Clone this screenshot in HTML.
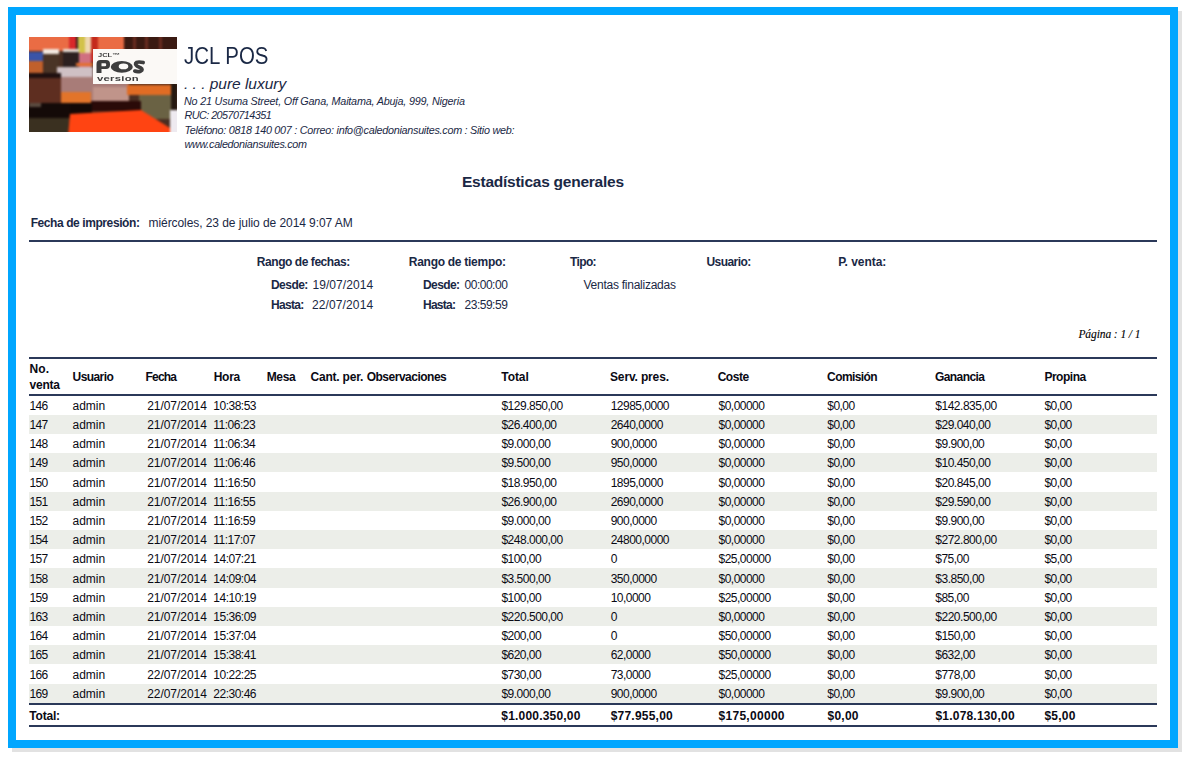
<!DOCTYPE html>
<html><head><meta charset="utf-8"><style>
html,body{margin:0;padding:0;background:#fff;}
body{width:1188px;height:758px;position:relative;overflow:hidden;font-family:"Liberation Sans",sans-serif;}
.frame{position:absolute;left:8px;top:7px;width:1154px;height:725px;border:8px solid #00a6ff;box-shadow:4px 4px 0 #e2e2e2;background:#fff;}
.t{position:absolute;white-space:nowrap;}
.r{position:absolute;}
.logo{position:absolute;left:29px;top:37px;}
</style></head><body>
<div class="frame"></div>
<svg class="logo" width="148" height="95" viewBox="0 0 148 95">
<defs><filter id="bl" x="-5%" y="-5%" width="110%" height="110%" color-interpolation-filters="sRGB"><feGaussianBlur stdDeviation="1.1"/></filter>
<filter id="bl2" color-interpolation-filters="sRGB"><feGaussianBlur stdDeviation="0.45"/></filter>
<clipPath id="cp"><rect width="148" height="95"/></clipPath></defs>
<g clip-path="url(#cp)">
<rect width="148" height="95" fill="#4a2e22"/>
<g filter="url(#bl)">
<rect x="-5" y="-5" width="100" height="19" fill="#ea6c44"/>
<rect x="40" y="-5" width="7" height="28" fill="#d8282a"/>
<rect x="47" y="-5" width="2" height="28" fill="#302020"/>
<rect x="49" y="-5" width="7" height="21" fill="#d2c24a"/>
<rect x="56" y="-5" width="6" height="21" fill="#eed8b0"/>
<rect x="62" y="-5" width="7" height="30" fill="#c42a1c"/>
<rect x="95" y="-5" width="58" height="18" fill="#3a1a12"/>
<rect x="104" y="-5" width="3" height="18" fill="#6a2c20"/>
<rect x="116" y="-5" width="3" height="18" fill="#6a2c20"/>
<rect x="130" y="-5" width="3" height="18" fill="#6a2c20"/>
<rect x="-5" y="15" width="19" height="9" fill="#3a54a8"/>
<rect x="-5" y="24" width="19" height="12" fill="#c0602c"/>
<rect x="14" y="12" width="16" height="5" fill="#f2e8e0"/>
<rect x="15" y="17" width="15" height="19" fill="#4a3426"/>
<rect x="34" y="12" width="16" height="4" fill="#e8e0d8"/>
<rect x="34" y="15" width="16" height="17" fill="#2c2020"/>
<rect x="50" y="16" width="12" height="16" fill="#d07080"/>
<rect x="47" y="26" width="17" height="3" fill="#e47030"/>
<rect x="28" y="30" width="36" height="10" fill="#cfc0c4"/>
<rect x="30" y="40" width="70" height="24" fill="#a87c78"/>
<rect x="64" y="50" width="36" height="14" fill="#c0948a"/>
<rect x="-5" y="36" width="37" height="5" fill="#201010"/>
<rect x="-5" y="41" width="37" height="26" fill="#5e2e20"/>
<rect x="32" y="55" width="30" height="11" fill="#e2742a"/>
<rect x="98" y="48" width="44" height="10" fill="#e06c24"/>
<rect x="110" y="58" width="34" height="24" fill="#6a6244"/>
<rect x="142" y="46" width="6" height="28" fill="#241810"/>
<rect x="62" y="64" width="50" height="10" fill="#2a0a08"/>
<rect x="13" y="66" width="50" height="12" fill="#120806"/>
<rect x="-5" y="66" width="46" height="15" fill="#140a08"/>
<rect x="0" y="66" width="12" height="4" fill="#5a4a40"/>
<rect x="-5" y="81" width="46" height="20" fill="#3a3020"/>
<polygon points="41,77 112,73 141,91 141,100 39,100" fill="#ff4412"/>
<rect x="141" y="73" width="10" height="27" fill="#eeeaf0"/>
</g>
<rect x="64" y="12" width="84" height="35" fill="#fbf9f6"/>
<g fill="#3e3e3e" filter="url(#bl2)">
<text x="69" y="20.5" font-family="'Liberation Sans', sans-serif" font-weight="bold" font-size="7.5" transform="translate(69 20.5) scale(1.0 0.8) translate(-69 -20.5)">JCL™</text>
<path fill-rule="evenodd" d="M67.5,36 L67.5,27 Q67.5,23 71.5,23 L77,23 Q81,23 81,27 L81,28 Q81,32 77,32 L72.5,32 L72.5,36 Z M72.5,26.3 L76,26.3 Q77.2,26.3 77.2,27.5 L77.2,28 Q77.2,29.2 76,29.2 L72.5,29.2 Z"/>
<path fill-rule="evenodd" d="M81.8,29.9 A11,5.9 0 1,0 103.8,29.9 A11,5.9 0 1,0 81.8,29.9 Z M89.7,29.4 A4.8,2.8 0 1,0 99.3,29.4 A4.8,2.8 0 1,0 89.7,29.4 Z"/>
<path fill="none" stroke="#3e3e3e" stroke-width="3.6" stroke-linecap="round" d="M114.2,25.6 Q110,24.4 107.5,25.4 Q105.2,27 108.2,29.2 L111.6,30.8 Q114.6,32.8 111.6,34.2 Q108.5,35.2 105.8,34"/>
<text x="68" y="43.8" font-family="'Liberation Sans', sans-serif" font-weight="bold" font-size="8" letter-spacing="0.2" transform="translate(68 43.8) scale(1.41 0.85) translate(-68 -43.8)">version</text>
</g>
</g>
</svg>

<div class="t" style="left:184.00px;top:44.26px;font-size:24.5px;line-height:24.5px;font-weight:normal;font-style:normal;font-family:'Liberation Sans', sans-serif;color:#1a2845;transform:scaleX(0.8350);transform-origin:0.00px 0;">JCL POS</div>
<div class="t" style="left:184.00px;top:75.88px;font-size:15.5px;line-height:15.5px;font-weight:normal;font-style:italic;font-family:'Liberation Sans', sans-serif;color:#1a2845;letter-spacing:-0.020px;">. . . pure luxury</div>
<div class="t" style="left:184.00px;top:95.86px;font-size:10.8px;line-height:10.8px;font-weight:normal;font-style:italic;font-family:'Liberation Sans', sans-serif;color:#1a2845;letter-spacing:-0.203px;">No 21 Usuma Street, Off Gana, Maitama, Abuja, 999, Nigeria</div>
<div class="t" style="left:184.50px;top:109.86px;font-size:10.8px;line-height:10.8px;font-weight:normal;font-style:italic;font-family:'Liberation Sans', sans-serif;color:#1a2845;letter-spacing:-0.552px;">RUC: 20570714351</div>
<div class="t" style="left:184.50px;top:125.26px;font-size:10.8px;line-height:10.8px;font-weight:normal;font-style:italic;font-family:'Liberation Sans', sans-serif;color:#1a2845;letter-spacing:-0.274px;">Teléfono: 0818 140 007 : Correo: info@caledoniansuites.com : Sitio web:</div>
<div class="t" style="left:184.50px;top:139.06px;font-size:10.8px;line-height:10.8px;font-weight:normal;font-style:italic;font-family:'Liberation Sans', sans-serif;color:#1a2845;letter-spacing:-0.312px;">www.caledoniansuites.com</div>
<div class="t" style="left:462.00px;top:174.18px;font-size:15.5px;line-height:15.5px;font-weight:bold;font-style:normal;font-family:'Liberation Sans', sans-serif;color:#1a2845;letter-spacing:-0.245px;">Estadísticas generales</div>
<div class="t" style="left:30.70px;top:216.64px;font-size:12px;line-height:12px;font-weight:bold;font-style:normal;font-family:'Liberation Sans', sans-serif;color:#1a2845;letter-spacing:-0.417px;">Fecha de impresión:</div>
<div class="t" style="left:148.50px;top:216.64px;font-size:12px;line-height:12px;font-weight:normal;font-style:normal;font-family:'Liberation Sans', sans-serif;color:#1a2845;letter-spacing:-0.070px;">miércoles, 23 de julio de 2014 9:07 AM</div>
<div class="r" style="left:29px;top:240px;width:1128px;height:2px;background:#2b3959"></div>
<div class="t" style="left:256.80px;top:255.54px;font-size:12px;line-height:12px;font-weight:bold;font-style:normal;font-family:'Liberation Sans', sans-serif;color:#1a2845;letter-spacing:-0.442px;">Rango de fechas:</div>
<div class="t" style="left:271.00px;top:278.54px;font-size:12px;line-height:12px;font-weight:bold;font-style:normal;font-family:'Liberation Sans', sans-serif;color:#1a2845;letter-spacing:-0.545px;">Desde:</div>
<div class="t" style="left:312.50px;top:278.54px;font-size:12px;line-height:12px;font-weight:normal;font-style:normal;font-family:'Liberation Sans', sans-serif;color:#1a2845;letter-spacing:0.061px;">19/07/2014</div>
<div class="t" style="left:271.00px;top:299.24px;font-size:12px;line-height:12px;font-weight:bold;font-style:normal;font-family:'Liberation Sans', sans-serif;color:#1a2845;letter-spacing:-0.695px;">Hasta:</div>
<div class="t" style="left:311.90px;top:299.24px;font-size:12px;line-height:12px;font-weight:normal;font-style:normal;font-family:'Liberation Sans', sans-serif;color:#1a2845;letter-spacing:0.128px;">22/07/2014</div>
<div class="t" style="left:408.80px;top:255.54px;font-size:12px;line-height:12px;font-weight:bold;font-style:normal;font-family:'Liberation Sans', sans-serif;color:#1a2845;letter-spacing:-0.275px;">Rango de tiempo:</div>
<div class="t" style="left:423.00px;top:278.54px;font-size:12px;line-height:12px;font-weight:bold;font-style:normal;font-family:'Liberation Sans', sans-serif;color:#1a2845;letter-spacing:-0.585px;">Desde:</div>
<div class="t" style="left:464.60px;top:278.54px;font-size:12px;line-height:12px;font-weight:normal;font-style:normal;font-family:'Liberation Sans', sans-serif;color:#1a2845;letter-spacing:-0.500px;">00:00:00</div>
<div class="t" style="left:423.00px;top:299.24px;font-size:12px;line-height:12px;font-weight:bold;font-style:normal;font-family:'Liberation Sans', sans-serif;color:#1a2845;letter-spacing:-0.735px;">Hasta:</div>
<div class="t" style="left:464.60px;top:299.24px;font-size:12px;line-height:12px;font-weight:normal;font-style:normal;font-family:'Liberation Sans', sans-serif;color:#1a2845;letter-spacing:-0.500px;">23:59:59</div>
<div class="t" style="left:570.00px;top:255.54px;font-size:12px;line-height:12px;font-weight:bold;font-style:normal;font-family:'Liberation Sans', sans-serif;color:#1a2845;letter-spacing:-0.625px;">Tipo:</div>
<div class="t" style="left:583.50px;top:279.24px;font-size:12px;line-height:12px;font-weight:normal;font-style:normal;font-family:'Liberation Sans', sans-serif;color:#1a2845;letter-spacing:-0.254px;">Ventas finalizadas</div>
<div class="t" style="left:706.50px;top:255.54px;font-size:12px;line-height:12px;font-weight:bold;font-style:normal;font-family:'Liberation Sans', sans-serif;color:#1a2845;letter-spacing:-0.568px;">Usuario:</div>
<div class="t" style="left:838.20px;top:255.54px;font-size:12px;line-height:12px;font-weight:bold;font-style:normal;font-family:'Liberation Sans', sans-serif;color:#1a2845;letter-spacing:-0.047px;">P. venta:</div>
<div class="t" style="left:1078.38px;top:329.27px;font-size:11.5px;line-height:11.5px;font-weight:normal;font-style:italic;font-family:'Liberation Serif', serif;color:#000;letter-spacing:-0.087px;-webkit-text-stroke:0.12px #000;">Página : 1 / 1</div>
<div class="r" style="left:29px;top:357px;width:1128px;height:2px;background:#2b3959"></div>
<div class="r" style="left:29px;top:394px;width:1128px;height:2px;background:#2b3959"></div>
<div class="t" style="left:72.60px;top:370.64px;font-size:12px;line-height:12px;font-weight:bold;font-style:normal;font-family:'Liberation Sans', sans-serif;color:#0a0a14;letter-spacing:-0.579px;">Usuario</div>
<div class="t" style="left:145.50px;top:370.64px;font-size:12px;line-height:12px;font-weight:bold;font-style:normal;font-family:'Liberation Sans', sans-serif;color:#0a0a14;letter-spacing:-0.787px;">Fecha</div>
<div class="t" style="left:213.70px;top:370.64px;font-size:12px;line-height:12px;font-weight:bold;font-style:normal;font-family:'Liberation Sans', sans-serif;color:#0a0a14;letter-spacing:-0.275px;">Hora</div>
<div class="t" style="left:266.70px;top:370.64px;font-size:12px;line-height:12px;font-weight:bold;font-style:normal;font-family:'Liberation Sans', sans-serif;color:#0a0a14;letter-spacing:-0.333px;">Mesa</div>
<div class="t" style="left:310.50px;top:370.64px;font-size:12px;line-height:12px;font-weight:bold;font-style:normal;font-family:'Liberation Sans', sans-serif;color:#0a0a14;letter-spacing:-0.208px;">Cant. per.</div>
<div class="t" style="left:366.70px;top:370.64px;font-size:12px;line-height:12px;font-weight:bold;font-style:normal;font-family:'Liberation Sans', sans-serif;color:#0a0a14;letter-spacing:-0.496px;">Observaciones</div>
<div class="t" style="left:501.30px;top:370.64px;font-size:12px;line-height:12px;font-weight:bold;font-style:normal;font-family:'Liberation Sans', sans-serif;color:#0a0a14;letter-spacing:-0.069px;">Total</div>
<div class="t" style="left:610.00px;top:370.64px;font-size:12px;line-height:12px;font-weight:bold;font-style:normal;font-family:'Liberation Sans', sans-serif;color:#0a0a14;letter-spacing:-0.148px;">Serv. pres.</div>
<div class="t" style="left:717.70px;top:370.64px;font-size:12px;line-height:12px;font-weight:bold;font-style:normal;font-family:'Liberation Sans', sans-serif;color:#0a0a14;letter-spacing:-0.488px;">Coste</div>
<div class="t" style="left:827.10px;top:370.64px;font-size:12px;line-height:12px;font-weight:bold;font-style:normal;font-family:'Liberation Sans', sans-serif;color:#0a0a14;letter-spacing:-0.582px;">Comisión</div>
<div class="t" style="left:935.00px;top:370.64px;font-size:12px;line-height:12px;font-weight:bold;font-style:normal;font-family:'Liberation Sans', sans-serif;color:#0a0a14;letter-spacing:-0.586px;">Ganancia</div>
<div class="t" style="left:1044.40px;top:370.64px;font-size:12px;line-height:12px;font-weight:bold;font-style:normal;font-family:'Liberation Sans', sans-serif;color:#0a0a14;letter-spacing:-0.475px;">Propina</div>
<div class="t" style="left:29.60px;top:362.84px;font-size:12px;line-height:12px;font-weight:bold;font-style:normal;font-family:'Liberation Sans', sans-serif;color:#0a0a14;letter-spacing:0.037px;">No.</div>
<div class="t" style="left:29.60px;top:379.24px;font-size:12px;line-height:12px;font-weight:bold;font-style:normal;font-family:'Liberation Sans', sans-serif;color:#0a0a14;letter-spacing:-0.256px;">venta</div>
<div class="r" style="left:29px;top:415px;width:1128px;height:19px;background:#eceee9"></div>
<div class="r" style="left:29px;top:453px;width:1128px;height:19px;background:#eceee9"></div>
<div class="r" style="left:29px;top:492px;width:1128px;height:19px;background:#eceee9"></div>
<div class="r" style="left:29px;top:530px;width:1128px;height:19px;background:#eceee9"></div>
<div class="r" style="left:29px;top:568px;width:1128px;height:20px;background:#eceee9"></div>
<div class="r" style="left:29px;top:607px;width:1128px;height:19px;background:#eceee9"></div>
<div class="r" style="left:29px;top:645px;width:1128px;height:19px;background:#eceee9"></div>
<div class="r" style="left:29px;top:684px;width:1128px;height:19px;background:#eceee9"></div>
<div class="t" style="left:29.60px;top:400.04px;font-size:12px;line-height:12px;font-weight:normal;font-style:normal;font-family:'Liberation Sans', sans-serif;color:#0a0a14;letter-spacing:-0.705px;">146</div>
<div class="t" style="left:72.50px;top:400.04px;font-size:12px;line-height:12px;font-weight:normal;font-style:normal;font-family:'Liberation Sans', sans-serif;color:#0a0a14;">admin</div>
<div class="t" style="left:147.20px;top:400.04px;font-size:12px;line-height:12px;font-weight:normal;font-style:normal;font-family:'Liberation Sans', sans-serif;color:#0a0a14;letter-spacing:-0.047px;">21/07/2014</div>
<div class="t" style="left:213.30px;top:400.04px;font-size:12px;line-height:12px;font-weight:normal;font-style:normal;font-family:'Liberation Sans', sans-serif;color:#0a0a14;letter-spacing:-0.497px;">10:38:53</div>
<div class="t" style="left:501.40px;top:400.04px;font-size:12px;line-height:12px;font-weight:normal;font-style:normal;font-family:'Liberation Sans', sans-serif;color:#0a0a14;letter-spacing:-0.489px;">$129.850,00</div>
<div class="t" style="left:610.70px;top:400.04px;font-size:12px;line-height:12px;font-weight:normal;font-style:normal;font-family:'Liberation Sans', sans-serif;color:#0a0a14;letter-spacing:-0.507px;">12985,0000</div>
<div class="t" style="left:718.50px;top:400.04px;font-size:12px;line-height:12px;font-weight:normal;font-style:normal;font-family:'Liberation Sans', sans-serif;color:#0a0a14;letter-spacing:-0.517px;">$0,00000</div>
<div class="t" style="left:827.30px;top:400.04px;font-size:12px;line-height:12px;font-weight:normal;font-style:normal;font-family:'Liberation Sans', sans-serif;color:#0a0a14;letter-spacing:-0.553px;">$0,00</div>
<div class="t" style="left:935.30px;top:400.04px;font-size:12px;line-height:12px;font-weight:normal;font-style:normal;font-family:'Liberation Sans', sans-serif;color:#0a0a14;letter-spacing:-0.489px;">$142.835,00</div>
<div class="t" style="left:1044.40px;top:400.04px;font-size:12px;line-height:12px;font-weight:normal;font-style:normal;font-family:'Liberation Sans', sans-serif;color:#0a0a14;letter-spacing:-0.553px;">$0,00</div>
<div class="t" style="left:29.60px;top:419.04px;font-size:12px;line-height:12px;font-weight:normal;font-style:normal;font-family:'Liberation Sans', sans-serif;color:#0a0a14;letter-spacing:-0.705px;">147</div>
<div class="t" style="left:72.50px;top:419.04px;font-size:12px;line-height:12px;font-weight:normal;font-style:normal;font-family:'Liberation Sans', sans-serif;color:#0a0a14;">admin</div>
<div class="t" style="left:147.20px;top:419.04px;font-size:12px;line-height:12px;font-weight:normal;font-style:normal;font-family:'Liberation Sans', sans-serif;color:#0a0a14;letter-spacing:-0.047px;">21/07/2014</div>
<div class="t" style="left:213.30px;top:419.04px;font-size:12px;line-height:12px;font-weight:normal;font-style:normal;font-family:'Liberation Sans', sans-serif;color:#0a0a14;letter-spacing:-0.497px;">11:06:23</div>
<div class="t" style="left:501.40px;top:419.04px;font-size:12px;line-height:12px;font-weight:normal;font-style:normal;font-family:'Liberation Sans', sans-serif;color:#0a0a14;letter-spacing:-0.491px;">$26.400,00</div>
<div class="t" style="left:610.70px;top:419.04px;font-size:12px;line-height:12px;font-weight:normal;font-style:normal;font-family:'Liberation Sans', sans-serif;color:#0a0a14;letter-spacing:-0.511px;">2640,0000</div>
<div class="t" style="left:718.50px;top:419.04px;font-size:12px;line-height:12px;font-weight:normal;font-style:normal;font-family:'Liberation Sans', sans-serif;color:#0a0a14;letter-spacing:-0.517px;">$0,00000</div>
<div class="t" style="left:827.30px;top:419.04px;font-size:12px;line-height:12px;font-weight:normal;font-style:normal;font-family:'Liberation Sans', sans-serif;color:#0a0a14;letter-spacing:-0.553px;">$0,00</div>
<div class="t" style="left:935.30px;top:419.04px;font-size:12px;line-height:12px;font-weight:normal;font-style:normal;font-family:'Liberation Sans', sans-serif;color:#0a0a14;letter-spacing:-0.491px;">$29.040,00</div>
<div class="t" style="left:1044.40px;top:419.04px;font-size:12px;line-height:12px;font-weight:normal;font-style:normal;font-family:'Liberation Sans', sans-serif;color:#0a0a14;letter-spacing:-0.553px;">$0,00</div>
<div class="t" style="left:29.60px;top:438.04px;font-size:12px;line-height:12px;font-weight:normal;font-style:normal;font-family:'Liberation Sans', sans-serif;color:#0a0a14;letter-spacing:-0.705px;">148</div>
<div class="t" style="left:72.50px;top:438.04px;font-size:12px;line-height:12px;font-weight:normal;font-style:normal;font-family:'Liberation Sans', sans-serif;color:#0a0a14;">admin</div>
<div class="t" style="left:147.20px;top:438.04px;font-size:12px;line-height:12px;font-weight:normal;font-style:normal;font-family:'Liberation Sans', sans-serif;color:#0a0a14;letter-spacing:-0.047px;">21/07/2014</div>
<div class="t" style="left:213.30px;top:438.04px;font-size:12px;line-height:12px;font-weight:normal;font-style:normal;font-family:'Liberation Sans', sans-serif;color:#0a0a14;letter-spacing:-0.497px;">11:06:34</div>
<div class="t" style="left:501.40px;top:438.04px;font-size:12px;line-height:12px;font-weight:normal;font-style:normal;font-family:'Liberation Sans', sans-serif;color:#0a0a14;letter-spacing:-0.494px;">$9.000,00</div>
<div class="t" style="left:610.70px;top:438.04px;font-size:12px;line-height:12px;font-weight:normal;font-style:normal;font-family:'Liberation Sans', sans-serif;color:#0a0a14;letter-spacing:-0.517px;">900,0000</div>
<div class="t" style="left:718.50px;top:438.04px;font-size:12px;line-height:12px;font-weight:normal;font-style:normal;font-family:'Liberation Sans', sans-serif;color:#0a0a14;letter-spacing:-0.517px;">$0,00000</div>
<div class="t" style="left:827.30px;top:438.04px;font-size:12px;line-height:12px;font-weight:normal;font-style:normal;font-family:'Liberation Sans', sans-serif;color:#0a0a14;letter-spacing:-0.553px;">$0,00</div>
<div class="t" style="left:935.30px;top:438.04px;font-size:12px;line-height:12px;font-weight:normal;font-style:normal;font-family:'Liberation Sans', sans-serif;color:#0a0a14;letter-spacing:-0.494px;">$9.900,00</div>
<div class="t" style="left:1044.40px;top:438.04px;font-size:12px;line-height:12px;font-weight:normal;font-style:normal;font-family:'Liberation Sans', sans-serif;color:#0a0a14;letter-spacing:-0.553px;">$0,00</div>
<div class="t" style="left:29.60px;top:457.04px;font-size:12px;line-height:12px;font-weight:normal;font-style:normal;font-family:'Liberation Sans', sans-serif;color:#0a0a14;letter-spacing:-0.705px;">149</div>
<div class="t" style="left:72.50px;top:457.04px;font-size:12px;line-height:12px;font-weight:normal;font-style:normal;font-family:'Liberation Sans', sans-serif;color:#0a0a14;">admin</div>
<div class="t" style="left:147.20px;top:457.04px;font-size:12px;line-height:12px;font-weight:normal;font-style:normal;font-family:'Liberation Sans', sans-serif;color:#0a0a14;letter-spacing:-0.047px;">21/07/2014</div>
<div class="t" style="left:213.30px;top:457.04px;font-size:12px;line-height:12px;font-weight:normal;font-style:normal;font-family:'Liberation Sans', sans-serif;color:#0a0a14;letter-spacing:-0.497px;">11:06:46</div>
<div class="t" style="left:501.40px;top:457.04px;font-size:12px;line-height:12px;font-weight:normal;font-style:normal;font-family:'Liberation Sans', sans-serif;color:#0a0a14;letter-spacing:-0.494px;">$9.500,00</div>
<div class="t" style="left:610.70px;top:457.04px;font-size:12px;line-height:12px;font-weight:normal;font-style:normal;font-family:'Liberation Sans', sans-serif;color:#0a0a14;letter-spacing:-0.517px;">950,0000</div>
<div class="t" style="left:718.50px;top:457.04px;font-size:12px;line-height:12px;font-weight:normal;font-style:normal;font-family:'Liberation Sans', sans-serif;color:#0a0a14;letter-spacing:-0.517px;">$0,00000</div>
<div class="t" style="left:827.30px;top:457.04px;font-size:12px;line-height:12px;font-weight:normal;font-style:normal;font-family:'Liberation Sans', sans-serif;color:#0a0a14;letter-spacing:-0.553px;">$0,00</div>
<div class="t" style="left:935.30px;top:457.04px;font-size:12px;line-height:12px;font-weight:normal;font-style:normal;font-family:'Liberation Sans', sans-serif;color:#0a0a14;letter-spacing:-0.491px;">$10.450,00</div>
<div class="t" style="left:1044.40px;top:457.04px;font-size:12px;line-height:12px;font-weight:normal;font-style:normal;font-family:'Liberation Sans', sans-serif;color:#0a0a14;letter-spacing:-0.553px;">$0,00</div>
<div class="t" style="left:29.60px;top:477.04px;font-size:12px;line-height:12px;font-weight:normal;font-style:normal;font-family:'Liberation Sans', sans-serif;color:#0a0a14;letter-spacing:-0.705px;">150</div>
<div class="t" style="left:72.50px;top:477.04px;font-size:12px;line-height:12px;font-weight:normal;font-style:normal;font-family:'Liberation Sans', sans-serif;color:#0a0a14;">admin</div>
<div class="t" style="left:147.20px;top:477.04px;font-size:12px;line-height:12px;font-weight:normal;font-style:normal;font-family:'Liberation Sans', sans-serif;color:#0a0a14;letter-spacing:-0.047px;">21/07/2014</div>
<div class="t" style="left:213.30px;top:477.04px;font-size:12px;line-height:12px;font-weight:normal;font-style:normal;font-family:'Liberation Sans', sans-serif;color:#0a0a14;letter-spacing:-0.497px;">11:16:50</div>
<div class="t" style="left:501.40px;top:477.04px;font-size:12px;line-height:12px;font-weight:normal;font-style:normal;font-family:'Liberation Sans', sans-serif;color:#0a0a14;letter-spacing:-0.491px;">$18.950,00</div>
<div class="t" style="left:610.70px;top:477.04px;font-size:12px;line-height:12px;font-weight:normal;font-style:normal;font-family:'Liberation Sans', sans-serif;color:#0a0a14;letter-spacing:-0.511px;">1895,0000</div>
<div class="t" style="left:718.50px;top:477.04px;font-size:12px;line-height:12px;font-weight:normal;font-style:normal;font-family:'Liberation Sans', sans-serif;color:#0a0a14;letter-spacing:-0.517px;">$0,00000</div>
<div class="t" style="left:827.30px;top:477.04px;font-size:12px;line-height:12px;font-weight:normal;font-style:normal;font-family:'Liberation Sans', sans-serif;color:#0a0a14;letter-spacing:-0.553px;">$0,00</div>
<div class="t" style="left:935.30px;top:477.04px;font-size:12px;line-height:12px;font-weight:normal;font-style:normal;font-family:'Liberation Sans', sans-serif;color:#0a0a14;letter-spacing:-0.491px;">$20.845,00</div>
<div class="t" style="left:1044.40px;top:477.04px;font-size:12px;line-height:12px;font-weight:normal;font-style:normal;font-family:'Liberation Sans', sans-serif;color:#0a0a14;letter-spacing:-0.553px;">$0,00</div>
<div class="t" style="left:29.60px;top:496.04px;font-size:12px;line-height:12px;font-weight:normal;font-style:normal;font-family:'Liberation Sans', sans-serif;color:#0a0a14;letter-spacing:-0.705px;">151</div>
<div class="t" style="left:72.50px;top:496.04px;font-size:12px;line-height:12px;font-weight:normal;font-style:normal;font-family:'Liberation Sans', sans-serif;color:#0a0a14;">admin</div>
<div class="t" style="left:147.20px;top:496.04px;font-size:12px;line-height:12px;font-weight:normal;font-style:normal;font-family:'Liberation Sans', sans-serif;color:#0a0a14;letter-spacing:-0.047px;">21/07/2014</div>
<div class="t" style="left:213.30px;top:496.04px;font-size:12px;line-height:12px;font-weight:normal;font-style:normal;font-family:'Liberation Sans', sans-serif;color:#0a0a14;letter-spacing:-0.497px;">11:16:55</div>
<div class="t" style="left:501.40px;top:496.04px;font-size:12px;line-height:12px;font-weight:normal;font-style:normal;font-family:'Liberation Sans', sans-serif;color:#0a0a14;letter-spacing:-0.491px;">$26.900,00</div>
<div class="t" style="left:610.70px;top:496.04px;font-size:12px;line-height:12px;font-weight:normal;font-style:normal;font-family:'Liberation Sans', sans-serif;color:#0a0a14;letter-spacing:-0.511px;">2690,0000</div>
<div class="t" style="left:718.50px;top:496.04px;font-size:12px;line-height:12px;font-weight:normal;font-style:normal;font-family:'Liberation Sans', sans-serif;color:#0a0a14;letter-spacing:-0.517px;">$0,00000</div>
<div class="t" style="left:827.30px;top:496.04px;font-size:12px;line-height:12px;font-weight:normal;font-style:normal;font-family:'Liberation Sans', sans-serif;color:#0a0a14;letter-spacing:-0.553px;">$0,00</div>
<div class="t" style="left:935.30px;top:496.04px;font-size:12px;line-height:12px;font-weight:normal;font-style:normal;font-family:'Liberation Sans', sans-serif;color:#0a0a14;letter-spacing:-0.491px;">$29.590,00</div>
<div class="t" style="left:1044.40px;top:496.04px;font-size:12px;line-height:12px;font-weight:normal;font-style:normal;font-family:'Liberation Sans', sans-serif;color:#0a0a14;letter-spacing:-0.553px;">$0,00</div>
<div class="t" style="left:29.60px;top:515.04px;font-size:12px;line-height:12px;font-weight:normal;font-style:normal;font-family:'Liberation Sans', sans-serif;color:#0a0a14;letter-spacing:-0.705px;">152</div>
<div class="t" style="left:72.50px;top:515.04px;font-size:12px;line-height:12px;font-weight:normal;font-style:normal;font-family:'Liberation Sans', sans-serif;color:#0a0a14;">admin</div>
<div class="t" style="left:147.20px;top:515.04px;font-size:12px;line-height:12px;font-weight:normal;font-style:normal;font-family:'Liberation Sans', sans-serif;color:#0a0a14;letter-spacing:-0.047px;">21/07/2014</div>
<div class="t" style="left:213.30px;top:515.04px;font-size:12px;line-height:12px;font-weight:normal;font-style:normal;font-family:'Liberation Sans', sans-serif;color:#0a0a14;letter-spacing:-0.497px;">11:16:59</div>
<div class="t" style="left:501.40px;top:515.04px;font-size:12px;line-height:12px;font-weight:normal;font-style:normal;font-family:'Liberation Sans', sans-serif;color:#0a0a14;letter-spacing:-0.494px;">$9.000,00</div>
<div class="t" style="left:610.70px;top:515.04px;font-size:12px;line-height:12px;font-weight:normal;font-style:normal;font-family:'Liberation Sans', sans-serif;color:#0a0a14;letter-spacing:-0.517px;">900,0000</div>
<div class="t" style="left:718.50px;top:515.04px;font-size:12px;line-height:12px;font-weight:normal;font-style:normal;font-family:'Liberation Sans', sans-serif;color:#0a0a14;letter-spacing:-0.517px;">$0,00000</div>
<div class="t" style="left:827.30px;top:515.04px;font-size:12px;line-height:12px;font-weight:normal;font-style:normal;font-family:'Liberation Sans', sans-serif;color:#0a0a14;letter-spacing:-0.553px;">$0,00</div>
<div class="t" style="left:935.30px;top:515.04px;font-size:12px;line-height:12px;font-weight:normal;font-style:normal;font-family:'Liberation Sans', sans-serif;color:#0a0a14;letter-spacing:-0.494px;">$9.900,00</div>
<div class="t" style="left:1044.40px;top:515.04px;font-size:12px;line-height:12px;font-weight:normal;font-style:normal;font-family:'Liberation Sans', sans-serif;color:#0a0a14;letter-spacing:-0.553px;">$0,00</div>
<div class="t" style="left:29.60px;top:534.04px;font-size:12px;line-height:12px;font-weight:normal;font-style:normal;font-family:'Liberation Sans', sans-serif;color:#0a0a14;letter-spacing:-0.705px;">154</div>
<div class="t" style="left:72.50px;top:534.04px;font-size:12px;line-height:12px;font-weight:normal;font-style:normal;font-family:'Liberation Sans', sans-serif;color:#0a0a14;">admin</div>
<div class="t" style="left:147.20px;top:534.04px;font-size:12px;line-height:12px;font-weight:normal;font-style:normal;font-family:'Liberation Sans', sans-serif;color:#0a0a14;letter-spacing:-0.047px;">21/07/2014</div>
<div class="t" style="left:213.30px;top:534.04px;font-size:12px;line-height:12px;font-weight:normal;font-style:normal;font-family:'Liberation Sans', sans-serif;color:#0a0a14;letter-spacing:-0.497px;">11:17:07</div>
<div class="t" style="left:501.40px;top:534.04px;font-size:12px;line-height:12px;font-weight:normal;font-style:normal;font-family:'Liberation Sans', sans-serif;color:#0a0a14;letter-spacing:-0.489px;">$248.000,00</div>
<div class="t" style="left:610.70px;top:534.04px;font-size:12px;line-height:12px;font-weight:normal;font-style:normal;font-family:'Liberation Sans', sans-serif;color:#0a0a14;letter-spacing:-0.507px;">24800,0000</div>
<div class="t" style="left:718.50px;top:534.04px;font-size:12px;line-height:12px;font-weight:normal;font-style:normal;font-family:'Liberation Sans', sans-serif;color:#0a0a14;letter-spacing:-0.517px;">$0,00000</div>
<div class="t" style="left:827.30px;top:534.04px;font-size:12px;line-height:12px;font-weight:normal;font-style:normal;font-family:'Liberation Sans', sans-serif;color:#0a0a14;letter-spacing:-0.553px;">$0,00</div>
<div class="t" style="left:935.30px;top:534.04px;font-size:12px;line-height:12px;font-weight:normal;font-style:normal;font-family:'Liberation Sans', sans-serif;color:#0a0a14;letter-spacing:-0.489px;">$272.800,00</div>
<div class="t" style="left:1044.40px;top:534.04px;font-size:12px;line-height:12px;font-weight:normal;font-style:normal;font-family:'Liberation Sans', sans-serif;color:#0a0a14;letter-spacing:-0.553px;">$0,00</div>
<div class="t" style="left:29.60px;top:553.04px;font-size:12px;line-height:12px;font-weight:normal;font-style:normal;font-family:'Liberation Sans', sans-serif;color:#0a0a14;letter-spacing:-0.705px;">157</div>
<div class="t" style="left:72.50px;top:553.04px;font-size:12px;line-height:12px;font-weight:normal;font-style:normal;font-family:'Liberation Sans', sans-serif;color:#0a0a14;">admin</div>
<div class="t" style="left:147.20px;top:553.04px;font-size:12px;line-height:12px;font-weight:normal;font-style:normal;font-family:'Liberation Sans', sans-serif;color:#0a0a14;letter-spacing:-0.047px;">21/07/2014</div>
<div class="t" style="left:213.30px;top:553.04px;font-size:12px;line-height:12px;font-weight:normal;font-style:normal;font-family:'Liberation Sans', sans-serif;color:#0a0a14;letter-spacing:-0.497px;">14:07:21</div>
<div class="t" style="left:501.40px;top:553.04px;font-size:12px;line-height:12px;font-weight:normal;font-style:normal;font-family:'Liberation Sans', sans-serif;color:#0a0a14;letter-spacing:-0.525px;">$100,00</div>
<div class="t" style="left:610.70px;top:553.04px;font-size:12px;line-height:12px;font-weight:normal;font-style:normal;font-family:'Liberation Sans', sans-serif;color:#0a0a14;">0</div>
<div class="t" style="left:718.50px;top:553.04px;font-size:12px;line-height:12px;font-weight:normal;font-style:normal;font-family:'Liberation Sans', sans-serif;color:#0a0a14;letter-spacing:-0.511px;">$25,00000</div>
<div class="t" style="left:827.30px;top:553.04px;font-size:12px;line-height:12px;font-weight:normal;font-style:normal;font-family:'Liberation Sans', sans-serif;color:#0a0a14;letter-spacing:-0.553px;">$0,00</div>
<div class="t" style="left:935.30px;top:553.04px;font-size:12px;line-height:12px;font-weight:normal;font-style:normal;font-family:'Liberation Sans', sans-serif;color:#0a0a14;letter-spacing:-0.536px;">$75,00</div>
<div class="t" style="left:1044.40px;top:553.04px;font-size:12px;line-height:12px;font-weight:normal;font-style:normal;font-family:'Liberation Sans', sans-serif;color:#0a0a14;letter-spacing:-0.553px;">$5,00</div>
<div class="t" style="left:29.60px;top:573.04px;font-size:12px;line-height:12px;font-weight:normal;font-style:normal;font-family:'Liberation Sans', sans-serif;color:#0a0a14;letter-spacing:-0.705px;">158</div>
<div class="t" style="left:72.50px;top:573.04px;font-size:12px;line-height:12px;font-weight:normal;font-style:normal;font-family:'Liberation Sans', sans-serif;color:#0a0a14;">admin</div>
<div class="t" style="left:147.20px;top:573.04px;font-size:12px;line-height:12px;font-weight:normal;font-style:normal;font-family:'Liberation Sans', sans-serif;color:#0a0a14;letter-spacing:-0.047px;">21/07/2014</div>
<div class="t" style="left:213.30px;top:573.04px;font-size:12px;line-height:12px;font-weight:normal;font-style:normal;font-family:'Liberation Sans', sans-serif;color:#0a0a14;letter-spacing:-0.497px;">14:09:04</div>
<div class="t" style="left:501.40px;top:573.04px;font-size:12px;line-height:12px;font-weight:normal;font-style:normal;font-family:'Liberation Sans', sans-serif;color:#0a0a14;letter-spacing:-0.494px;">$3.500,00</div>
<div class="t" style="left:610.70px;top:573.04px;font-size:12px;line-height:12px;font-weight:normal;font-style:normal;font-family:'Liberation Sans', sans-serif;color:#0a0a14;letter-spacing:-0.517px;">350,0000</div>
<div class="t" style="left:718.50px;top:573.04px;font-size:12px;line-height:12px;font-weight:normal;font-style:normal;font-family:'Liberation Sans', sans-serif;color:#0a0a14;letter-spacing:-0.517px;">$0,00000</div>
<div class="t" style="left:827.30px;top:573.04px;font-size:12px;line-height:12px;font-weight:normal;font-style:normal;font-family:'Liberation Sans', sans-serif;color:#0a0a14;letter-spacing:-0.553px;">$0,00</div>
<div class="t" style="left:935.30px;top:573.04px;font-size:12px;line-height:12px;font-weight:normal;font-style:normal;font-family:'Liberation Sans', sans-serif;color:#0a0a14;letter-spacing:-0.494px;">$3.850,00</div>
<div class="t" style="left:1044.40px;top:573.04px;font-size:12px;line-height:12px;font-weight:normal;font-style:normal;font-family:'Liberation Sans', sans-serif;color:#0a0a14;letter-spacing:-0.553px;">$0,00</div>
<div class="t" style="left:29.60px;top:592.04px;font-size:12px;line-height:12px;font-weight:normal;font-style:normal;font-family:'Liberation Sans', sans-serif;color:#0a0a14;letter-spacing:-0.705px;">159</div>
<div class="t" style="left:72.50px;top:592.04px;font-size:12px;line-height:12px;font-weight:normal;font-style:normal;font-family:'Liberation Sans', sans-serif;color:#0a0a14;">admin</div>
<div class="t" style="left:147.20px;top:592.04px;font-size:12px;line-height:12px;font-weight:normal;font-style:normal;font-family:'Liberation Sans', sans-serif;color:#0a0a14;letter-spacing:-0.047px;">21/07/2014</div>
<div class="t" style="left:213.30px;top:592.04px;font-size:12px;line-height:12px;font-weight:normal;font-style:normal;font-family:'Liberation Sans', sans-serif;color:#0a0a14;letter-spacing:-0.497px;">14:10:19</div>
<div class="t" style="left:501.40px;top:592.04px;font-size:12px;line-height:12px;font-weight:normal;font-style:normal;font-family:'Liberation Sans', sans-serif;color:#0a0a14;letter-spacing:-0.525px;">$100,00</div>
<div class="t" style="left:610.70px;top:592.04px;font-size:12px;line-height:12px;font-weight:normal;font-style:normal;font-family:'Liberation Sans', sans-serif;color:#0a0a14;letter-spacing:-0.525px;">10,0000</div>
<div class="t" style="left:718.50px;top:592.04px;font-size:12px;line-height:12px;font-weight:normal;font-style:normal;font-family:'Liberation Sans', sans-serif;color:#0a0a14;letter-spacing:-0.511px;">$25,00000</div>
<div class="t" style="left:827.30px;top:592.04px;font-size:12px;line-height:12px;font-weight:normal;font-style:normal;font-family:'Liberation Sans', sans-serif;color:#0a0a14;letter-spacing:-0.553px;">$0,00</div>
<div class="t" style="left:935.30px;top:592.04px;font-size:12px;line-height:12px;font-weight:normal;font-style:normal;font-family:'Liberation Sans', sans-serif;color:#0a0a14;letter-spacing:-0.536px;">$85,00</div>
<div class="t" style="left:1044.40px;top:592.04px;font-size:12px;line-height:12px;font-weight:normal;font-style:normal;font-family:'Liberation Sans', sans-serif;color:#0a0a14;letter-spacing:-0.553px;">$0,00</div>
<div class="t" style="left:29.60px;top:611.04px;font-size:12px;line-height:12px;font-weight:normal;font-style:normal;font-family:'Liberation Sans', sans-serif;color:#0a0a14;letter-spacing:-0.705px;">163</div>
<div class="t" style="left:72.50px;top:611.04px;font-size:12px;line-height:12px;font-weight:normal;font-style:normal;font-family:'Liberation Sans', sans-serif;color:#0a0a14;">admin</div>
<div class="t" style="left:147.20px;top:611.04px;font-size:12px;line-height:12px;font-weight:normal;font-style:normal;font-family:'Liberation Sans', sans-serif;color:#0a0a14;letter-spacing:-0.047px;">21/07/2014</div>
<div class="t" style="left:213.30px;top:611.04px;font-size:12px;line-height:12px;font-weight:normal;font-style:normal;font-family:'Liberation Sans', sans-serif;color:#0a0a14;letter-spacing:-0.497px;">15:36:09</div>
<div class="t" style="left:501.40px;top:611.04px;font-size:12px;line-height:12px;font-weight:normal;font-style:normal;font-family:'Liberation Sans', sans-serif;color:#0a0a14;letter-spacing:-0.489px;">$220.500,00</div>
<div class="t" style="left:610.70px;top:611.04px;font-size:12px;line-height:12px;font-weight:normal;font-style:normal;font-family:'Liberation Sans', sans-serif;color:#0a0a14;">0</div>
<div class="t" style="left:718.50px;top:611.04px;font-size:12px;line-height:12px;font-weight:normal;font-style:normal;font-family:'Liberation Sans', sans-serif;color:#0a0a14;letter-spacing:-0.517px;">$0,00000</div>
<div class="t" style="left:827.30px;top:611.04px;font-size:12px;line-height:12px;font-weight:normal;font-style:normal;font-family:'Liberation Sans', sans-serif;color:#0a0a14;letter-spacing:-0.553px;">$0,00</div>
<div class="t" style="left:935.30px;top:611.04px;font-size:12px;line-height:12px;font-weight:normal;font-style:normal;font-family:'Liberation Sans', sans-serif;color:#0a0a14;letter-spacing:-0.489px;">$220.500,00</div>
<div class="t" style="left:1044.40px;top:611.04px;font-size:12px;line-height:12px;font-weight:normal;font-style:normal;font-family:'Liberation Sans', sans-serif;color:#0a0a14;letter-spacing:-0.553px;">$0,00</div>
<div class="t" style="left:29.60px;top:630.04px;font-size:12px;line-height:12px;font-weight:normal;font-style:normal;font-family:'Liberation Sans', sans-serif;color:#0a0a14;letter-spacing:-0.705px;">164</div>
<div class="t" style="left:72.50px;top:630.04px;font-size:12px;line-height:12px;font-weight:normal;font-style:normal;font-family:'Liberation Sans', sans-serif;color:#0a0a14;">admin</div>
<div class="t" style="left:147.20px;top:630.04px;font-size:12px;line-height:12px;font-weight:normal;font-style:normal;font-family:'Liberation Sans', sans-serif;color:#0a0a14;letter-spacing:-0.047px;">21/07/2014</div>
<div class="t" style="left:213.30px;top:630.04px;font-size:12px;line-height:12px;font-weight:normal;font-style:normal;font-family:'Liberation Sans', sans-serif;color:#0a0a14;letter-spacing:-0.497px;">15:37:04</div>
<div class="t" style="left:501.40px;top:630.04px;font-size:12px;line-height:12px;font-weight:normal;font-style:normal;font-family:'Liberation Sans', sans-serif;color:#0a0a14;letter-spacing:-0.525px;">$200,00</div>
<div class="t" style="left:610.70px;top:630.04px;font-size:12px;line-height:12px;font-weight:normal;font-style:normal;font-family:'Liberation Sans', sans-serif;color:#0a0a14;">0</div>
<div class="t" style="left:718.50px;top:630.04px;font-size:12px;line-height:12px;font-weight:normal;font-style:normal;font-family:'Liberation Sans', sans-serif;color:#0a0a14;letter-spacing:-0.511px;">$50,00000</div>
<div class="t" style="left:827.30px;top:630.04px;font-size:12px;line-height:12px;font-weight:normal;font-style:normal;font-family:'Liberation Sans', sans-serif;color:#0a0a14;letter-spacing:-0.553px;">$0,00</div>
<div class="t" style="left:935.30px;top:630.04px;font-size:12px;line-height:12px;font-weight:normal;font-style:normal;font-family:'Liberation Sans', sans-serif;color:#0a0a14;letter-spacing:-0.525px;">$150,00</div>
<div class="t" style="left:1044.40px;top:630.04px;font-size:12px;line-height:12px;font-weight:normal;font-style:normal;font-family:'Liberation Sans', sans-serif;color:#0a0a14;letter-spacing:-0.553px;">$0,00</div>
<div class="t" style="left:29.60px;top:649.04px;font-size:12px;line-height:12px;font-weight:normal;font-style:normal;font-family:'Liberation Sans', sans-serif;color:#0a0a14;letter-spacing:-0.705px;">165</div>
<div class="t" style="left:72.50px;top:649.04px;font-size:12px;line-height:12px;font-weight:normal;font-style:normal;font-family:'Liberation Sans', sans-serif;color:#0a0a14;">admin</div>
<div class="t" style="left:147.20px;top:649.04px;font-size:12px;line-height:12px;font-weight:normal;font-style:normal;font-family:'Liberation Sans', sans-serif;color:#0a0a14;letter-spacing:-0.047px;">21/07/2014</div>
<div class="t" style="left:213.30px;top:649.04px;font-size:12px;line-height:12px;font-weight:normal;font-style:normal;font-family:'Liberation Sans', sans-serif;color:#0a0a14;letter-spacing:-0.497px;">15:38:41</div>
<div class="t" style="left:501.40px;top:649.04px;font-size:12px;line-height:12px;font-weight:normal;font-style:normal;font-family:'Liberation Sans', sans-serif;color:#0a0a14;letter-spacing:-0.525px;">$620,00</div>
<div class="t" style="left:610.70px;top:649.04px;font-size:12px;line-height:12px;font-weight:normal;font-style:normal;font-family:'Liberation Sans', sans-serif;color:#0a0a14;letter-spacing:-0.525px;">62,0000</div>
<div class="t" style="left:718.50px;top:649.04px;font-size:12px;line-height:12px;font-weight:normal;font-style:normal;font-family:'Liberation Sans', sans-serif;color:#0a0a14;letter-spacing:-0.511px;">$50,00000</div>
<div class="t" style="left:827.30px;top:649.04px;font-size:12px;line-height:12px;font-weight:normal;font-style:normal;font-family:'Liberation Sans', sans-serif;color:#0a0a14;letter-spacing:-0.553px;">$0,00</div>
<div class="t" style="left:935.30px;top:649.04px;font-size:12px;line-height:12px;font-weight:normal;font-style:normal;font-family:'Liberation Sans', sans-serif;color:#0a0a14;letter-spacing:-0.525px;">$632,00</div>
<div class="t" style="left:1044.40px;top:649.04px;font-size:12px;line-height:12px;font-weight:normal;font-style:normal;font-family:'Liberation Sans', sans-serif;color:#0a0a14;letter-spacing:-0.553px;">$0,00</div>
<div class="t" style="left:29.60px;top:669.04px;font-size:12px;line-height:12px;font-weight:normal;font-style:normal;font-family:'Liberation Sans', sans-serif;color:#0a0a14;letter-spacing:-0.705px;">166</div>
<div class="t" style="left:72.50px;top:669.04px;font-size:12px;line-height:12px;font-weight:normal;font-style:normal;font-family:'Liberation Sans', sans-serif;color:#0a0a14;">admin</div>
<div class="t" style="left:147.20px;top:669.04px;font-size:12px;line-height:12px;font-weight:normal;font-style:normal;font-family:'Liberation Sans', sans-serif;color:#0a0a14;letter-spacing:-0.047px;">22/07/2014</div>
<div class="t" style="left:213.30px;top:669.04px;font-size:12px;line-height:12px;font-weight:normal;font-style:normal;font-family:'Liberation Sans', sans-serif;color:#0a0a14;letter-spacing:-0.497px;">10:22:25</div>
<div class="t" style="left:501.40px;top:669.04px;font-size:12px;line-height:12px;font-weight:normal;font-style:normal;font-family:'Liberation Sans', sans-serif;color:#0a0a14;letter-spacing:-0.525px;">$730,00</div>
<div class="t" style="left:610.70px;top:669.04px;font-size:12px;line-height:12px;font-weight:normal;font-style:normal;font-family:'Liberation Sans', sans-serif;color:#0a0a14;letter-spacing:-0.525px;">73,0000</div>
<div class="t" style="left:718.50px;top:669.04px;font-size:12px;line-height:12px;font-weight:normal;font-style:normal;font-family:'Liberation Sans', sans-serif;color:#0a0a14;letter-spacing:-0.511px;">$25,00000</div>
<div class="t" style="left:827.30px;top:669.04px;font-size:12px;line-height:12px;font-weight:normal;font-style:normal;font-family:'Liberation Sans', sans-serif;color:#0a0a14;letter-spacing:-0.553px;">$0,00</div>
<div class="t" style="left:935.30px;top:669.04px;font-size:12px;line-height:12px;font-weight:normal;font-style:normal;font-family:'Liberation Sans', sans-serif;color:#0a0a14;letter-spacing:-0.525px;">$778,00</div>
<div class="t" style="left:1044.40px;top:669.04px;font-size:12px;line-height:12px;font-weight:normal;font-style:normal;font-family:'Liberation Sans', sans-serif;color:#0a0a14;letter-spacing:-0.553px;">$0,00</div>
<div class="t" style="left:29.60px;top:688.04px;font-size:12px;line-height:12px;font-weight:normal;font-style:normal;font-family:'Liberation Sans', sans-serif;color:#0a0a14;letter-spacing:-0.705px;">169</div>
<div class="t" style="left:72.50px;top:688.04px;font-size:12px;line-height:12px;font-weight:normal;font-style:normal;font-family:'Liberation Sans', sans-serif;color:#0a0a14;">admin</div>
<div class="t" style="left:147.20px;top:688.04px;font-size:12px;line-height:12px;font-weight:normal;font-style:normal;font-family:'Liberation Sans', sans-serif;color:#0a0a14;letter-spacing:-0.047px;">22/07/2014</div>
<div class="t" style="left:213.30px;top:688.04px;font-size:12px;line-height:12px;font-weight:normal;font-style:normal;font-family:'Liberation Sans', sans-serif;color:#0a0a14;letter-spacing:-0.497px;">22:30:46</div>
<div class="t" style="left:501.40px;top:688.04px;font-size:12px;line-height:12px;font-weight:normal;font-style:normal;font-family:'Liberation Sans', sans-serif;color:#0a0a14;letter-spacing:-0.494px;">$9.000,00</div>
<div class="t" style="left:610.70px;top:688.04px;font-size:12px;line-height:12px;font-weight:normal;font-style:normal;font-family:'Liberation Sans', sans-serif;color:#0a0a14;letter-spacing:-0.517px;">900,0000</div>
<div class="t" style="left:718.50px;top:688.04px;font-size:12px;line-height:12px;font-weight:normal;font-style:normal;font-family:'Liberation Sans', sans-serif;color:#0a0a14;letter-spacing:-0.517px;">$0,00000</div>
<div class="t" style="left:827.30px;top:688.04px;font-size:12px;line-height:12px;font-weight:normal;font-style:normal;font-family:'Liberation Sans', sans-serif;color:#0a0a14;letter-spacing:-0.553px;">$0,00</div>
<div class="t" style="left:935.30px;top:688.04px;font-size:12px;line-height:12px;font-weight:normal;font-style:normal;font-family:'Liberation Sans', sans-serif;color:#0a0a14;letter-spacing:-0.494px;">$9.900,00</div>
<div class="t" style="left:1044.40px;top:688.04px;font-size:12px;line-height:12px;font-weight:normal;font-style:normal;font-family:'Liberation Sans', sans-serif;color:#0a0a14;letter-spacing:-0.553px;">$0,00</div>
<div class="r" style="left:29px;top:703px;width:1128px;height:2px;background:#2b3959"></div>
<div class="t" style="left:29.30px;top:709.74px;font-size:12px;line-height:12px;font-weight:bold;font-style:normal;font-family:'Liberation Sans', sans-serif;color:#0a0a14;letter-spacing:-0.195px;">Total:</div>
<div class="t" style="left:501.30px;top:709.74px;font-size:12px;line-height:12px;font-weight:bold;font-style:normal;font-family:'Liberation Sans', sans-serif;color:#0a0a14;letter-spacing:0.193px;">$1.000.350,00</div>
<div class="t" style="left:610.70px;top:709.74px;font-size:12px;line-height:12px;font-weight:bold;font-style:normal;font-family:'Liberation Sans', sans-serif;color:#0a0a14;letter-spacing:0.220px;">$77.955,00</div>
<div class="t" style="left:718.50px;top:709.74px;font-size:12px;line-height:12px;font-weight:bold;font-style:normal;font-family:'Liberation Sans', sans-serif;color:#0a0a14;letter-spacing:0.293px;">$175,00000</div>
<div class="t" style="left:827.50px;top:709.74px;font-size:12px;line-height:12px;font-weight:bold;font-style:normal;font-family:'Liberation Sans', sans-serif;color:#0a0a14;letter-spacing:0.247px;">$0,00</div>
<div class="t" style="left:935.50px;top:709.74px;font-size:12px;line-height:12px;font-weight:bold;font-style:normal;font-family:'Liberation Sans', sans-serif;color:#0a0a14;letter-spacing:0.193px;">$1.078.130,00</div>
<div class="t" style="left:1044.40px;top:709.74px;font-size:12px;line-height:12px;font-weight:bold;font-style:normal;font-family:'Liberation Sans', sans-serif;color:#0a0a14;letter-spacing:0.247px;">$5,00</div>
<div class="r" style="left:29px;top:725px;width:1128px;height:2px;background:#2b3959"></div>
</body></html>
